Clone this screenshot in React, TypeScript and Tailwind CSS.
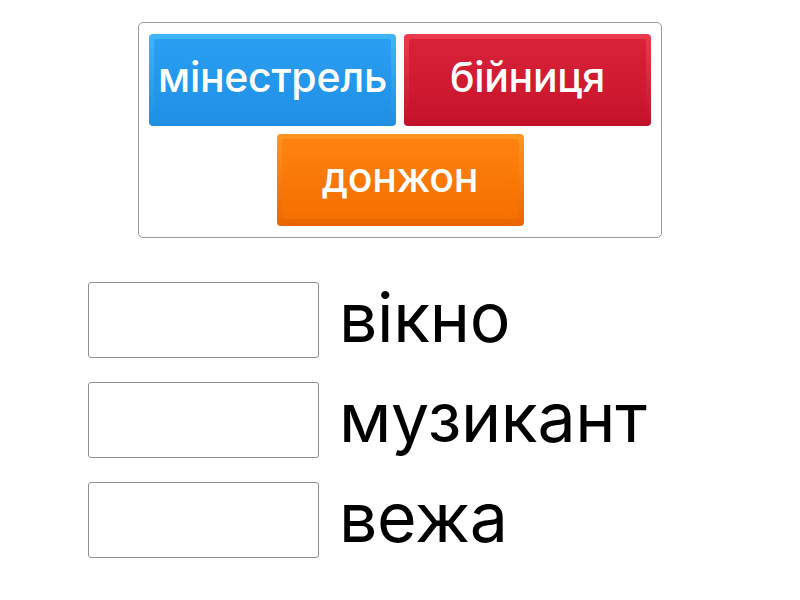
import React from 'react';

type TileProps = {
  label: string;
  outer: string;
  inner: string;
};

function Tile({ label, outer, inner }: TileProps) {
  return (
    <div className={`w-[247px] h-[92px] rounded-[4px] px-[5px] pt-[5px] pb-[7px] ${outer}`}>
      <div className={`w-full h-full rounded-[2px] flex items-center justify-center ${inner}`}>
        <span className="text-white text-[41px] leading-none font-medium tracking-[-0.3px] pb-[4px]">{label}</span>
      </div>
    </div>
  );
}

const rows = ['вікно', 'музикант', 'вежа'];

export default function App() {
  return (
    <div
      className="w-[800px] h-[600px] bg-white flex flex-col items-center"
      style={{ fontFamily: 'Inter, "Noto Sans", sans-serif' }}
    >
      {/* Tiles */}
      <div className="mt-[22px] w-[524px] h-[216px] border border-[#9a9a9a] rounded-[5px] pt-[11px] px-[10px] flex flex-wrap justify-center content-start gap-[8px]">
        <Tile
          label="мінестрель"
          outer="bg-gradient-to-b from-[#3fb6fb] to-[#1e8ee0]"
          inner="bg-gradient-to-b from-[#2a9ff2] to-[#1f90e6]"
        />
        <Tile
          label="бійниця"
          outer="bg-gradient-to-b from-[#ec3a4e] to-[#c01028]"
          inner="bg-gradient-to-b from-[#d9223a] to-[#c8132c]"
        />
        <Tile
          label="донжон"
          outer="bg-gradient-to-b from-[#ff9522] to-[#ea6400]"
          inner="bg-gradient-to-b from-[#ff8210] to-[#f46f00]"
        />
      </div>

      {/* Targets */}
      <div className="mt-[44px] w-[800px] pl-[88px] flex flex-col gap-[24px]">
        {rows.map((w) => (
          <div key={w} className="flex items-center h-[76px]">
            <div className="w-[231px] h-[76px] border border-[#8f8f8f] rounded-[3px] bg-white" />
            <span className="ml-[20px] text-[68px] leading-none text-black pb-[6px] tracking-[-0.3px]">{w}</span>
          </div>
        ))}
      </div>
    </div>
  );
}
